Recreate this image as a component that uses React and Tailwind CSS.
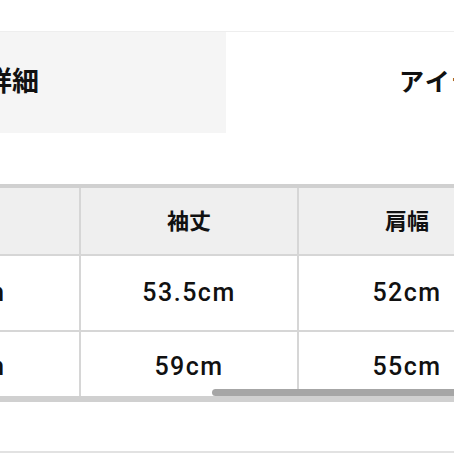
export default function App() {
  const cols = [
    { head: '着丈', a: '64cm', b: '66cm' },
    { head: '袖丈', a: '53.5cm', b: '59cm' },
    { head: '肩幅', a: '52cm', b: '55cm' },
  ];

  return (
    <div className="w-[454px] h-[454px] bg-white overflow-hidden relative text-[#111111] font-['Liberation_Sans','Noto_Sans_CJK_JP',sans-serif]">
      {/* Tabs */}
      <div className="h-[31px]" />
      <div className="flex h-[102px] border-t border-[#eeeeee]">
        <div className="w-[226px] shrink-0 bg-[#f5f5f5] flex items-center overflow-hidden">
          <span className="ml-[-15px] text-[27px] font-bold whitespace-nowrap">詳細</span>
        </div>
        <div className="flex-1 flex items-center overflow-hidden">
          <span className="ml-[173px] text-[25px] font-bold tracking-[2px] whitespace-nowrap">アイテム</span>
        </div>
      </div>

      {/* Size table */}
      <div className="mt-[51px] relative overflow-hidden">
        <div className="ml-[-137px] w-[660px] border-t-4 border-b-[6px] border-[#d0d0d0]">
          <div className="flex h-[68px] bg-[#efefef] border-b-2 border-[#d6d6d6]">
            {cols.map((c) => (
              <div key={c.head} className="w-[218px] shrink-0 border-r-2 border-[#d6d6d6] flex items-center justify-center text-[22px] font-bold">
                {c.head}
              </div>
            ))}
          </div>
          <div className="flex h-[76px] border-b-2 border-[#d6d6d6]">
            {cols.map((c) => (
              <div key={c.head} className="w-[218px] shrink-0 border-r-2 border-[#d6d6d6] flex items-center justify-center font-['Roboto',sans-serif] font-medium text-[25px] tracking-[1.5px]">
                {c.a}
              </div>
            ))}
          </div>
          <div className="flex h-[64px]">
            {cols.map((c) => (
              <div key={c.head} className="w-[218px] shrink-0 border-r-2 border-[#d6d6d6] flex items-center justify-center pt-[6px] font-['Roboto',sans-serif] font-medium text-[25px] tracking-[1.5px]">
                {c.b}
              </div>
            ))}
          </div>
        </div>
        {/* scrollbar */}
        <div className="absolute left-[212px] bottom-[6px] w-[260px] h-[7px] rounded-full bg-[#a6a6a6]" />
      </div>

      <div className="h-[49px]" />
      <div className="border-t-2 border-[#e2e2e2]" />
    </div>
  );
}
